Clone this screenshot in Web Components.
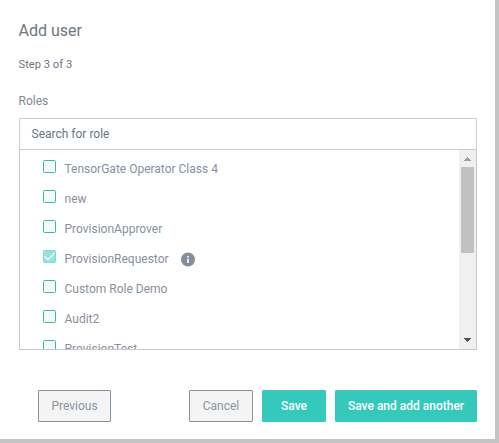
<!DOCTYPE html>
<html lang="en">
<head>
<meta charset="utf-8">
<title>Add user</title>
<style>
html, body { margin: 0; height: 100%; overflow: hidden; }
body { font-family: Roboto, "Liberation Sans", sans-serif; background: #c3c3c3; }
</style>
</head>
<body>
<user-dialog heading="Add user" step="Step 3 of 3">
  <role-picker label="Roles" prompt="Search for role">
    <role-option>TensorGate Operator Class 4</role-option>
    <role-option>new</role-option>
    <role-option>ProvisionApprover</role-option>
    <role-option checked info>ProvisionRequestor</role-option>
    <role-option>Custom Role Demo</role-option>
    <role-option>Audit2</role-option>
    <role-option>ProvisionTest</role-option>
  </role-picker>
  <action-button slot="back" style="--w:73px">Previous</action-button>
  <action-button slot="actions" style="--w:64px">Cancel</action-button>
  <action-button slot="actions" primary style="--w:64px">Save</action-button>
  <action-button slot="actions" primary style="--w:142px">Save and add another</action-button>
</user-dialog>
<script>
class UserDialog extends HTMLElement {
  connectedCallback() {
    this.attachShadow({ mode: 'open' }).innerHTML = `
      <style>
        :host { display: flex; flex-direction: column; box-sizing: border-box; width: 495px; height: 439px;
          padding: 21px 18px 17px 19px; background: #fff; color: #6c7681; }
        h1 { margin: 0 0 0 -0.5px; font-size: 16px; line-height: 20px; font-weight: 400; }
        p { margin: 17px 0 0 -0.5px; font-size: 11.2px; line-height: 14px; }
        footer { display: flex; justify-content: space-between; margin-top: auto; padding-left: 19px; }
        .end { display: flex; gap: 9px; }
      </style>
      <h1>${this.getAttribute('heading')}</h1>
      <p>${this.getAttribute('step')}</p>
      <slot></slot>
      <footer><slot name="back"></slot><div class="end"><slot name="actions"></slot></div></footer>`;
  }
}
class RolePicker extends HTMLElement {
  connectedCallback() {
    this.attachShadow({ mode: 'open' }).innerHTML = `
      <style>
        :host { display: block; margin-top: 21px; font-size: 12px; }
        label { display: block; height: 25px; margin-left: -0.5px; line-height: 16px; color: #7f8a96; }
        .search { box-sizing: border-box; height: 32px; border: 1px solid #cbd0d8; border-bottom-color: #c8ccd2;
          padding-left: 11.5px; line-height: 30px; color: #6c7681; }
        .box { display: flex; box-sizing: border-box; height: 200px; border: 1px solid #c5c8ca; border-top: 0; }
        .list { flex: 1; overflow: hidden; padding: 3px 0 0 23px; height: 196px; }
        scroll-track { flex: none; }
      </style>
      <label>${this.getAttribute('label')}</label>
      <div class="search">${this.getAttribute('prompt')}</div>
      <div class="box"><div class="list"><slot></slot></div><scroll-track></scroll-track></div>`;
  }
}
class RoleOption extends HTMLElement {
  connectedCallback() {
    const checked = this.hasAttribute('checked');
    this.attachShadow({ mode: 'open' }).innerHTML = `
      <style>
        :host { display: flex; height: 30px; color: #87919d; font-size: 12px; line-height: 33px; }
        .check { flex: none; box-sizing: border-box; width: 13px; height: 13px; margin: 7px 8.5px 0 0;
          border: 1px solid #32bda5; border-radius: 1.5px; background: #f7f8fa; }
        .check.on { border-color: #76ddcf; background: #98e4da; }
        .check svg { display: block; }
        .info { margin: 9px 0 0 12px; }
      </style>
      <span class="check ${checked ? 'on' : ''}">${checked
        ? '<svg width="11" height="11" viewBox="0 0 11 11"><path d="M.3 5.2 4 8.8 10.8 2" fill="none" stroke="#fff" stroke-width="1.1"/></svg>' : ''}</span>
      <span><slot></slot></span>
      ${this.hasAttribute('info')
        ? '<svg class="info" width="14" height="15" viewBox="0 0 14 15"><circle cx="7" cy="7.5" r="7" fill="#848e99"/><path d="M6 4h2v1.5H6zM6 6.7h2V11H6z" fill="#e8eaec"/></svg>' : ''}`;
  }
}
class ScrollTrack extends HTMLElement {
  connectedCallback() {
    this.attachShadow({ mode: 'open' }).innerHTML = `
      <style>
        :host { display: flex; flex-direction: column; align-items: center; width: 17px; background: #f0f0f0; }
        svg { display: block; flex: none; }
        .thumb { width: 13px; height: 86px; background: #c1c1c1; }
        .down { margin-top: auto; }
      </style>
      <svg width="17" height="17" shape-rendering="crispEdges"><path d="M8 7h1v1h1v1h1v1h1v1H5v-1h1V9h1V8h1z" fill="#a0a0a0"/></svg>
      <div class="thumb"></div>
      <svg class="down" width="17" height="17" shape-rendering="crispEdges"><path d="M5 6h7v1h-1v1h-1v1H9v1H8V9H7V8H6V7H5z" fill="#505050"/></svg>`;
  }
}
class ActionButton extends HTMLElement {
  connectedCallback() {
    this.attachShadow({ mode: 'open' }).innerHTML = `
      <style>
        :host { display: block; width: var(--w); }
        button { display: block; box-sizing: border-box; width: 100%; height: 32px; padding: 0; white-space: nowrap;
          border: 1px solid #84929f; border-radius: 1px; background: #f4f4f4; color: #8b959f;
          font: 400 12px/30px Roboto, "Liberation Sans", sans-serif; }
        :host([primary]) button { border-color: #35c9bb; background: #35c9bb; color: #fff; font-weight: 500; }
      </style>
      <button type="button"><slot></slot></button>`;
  }
}
customElements.define('scroll-track', ScrollTrack);
customElements.define('action-button', ActionButton);
customElements.define('role-option', RoleOption);
customElements.define('role-picker', RolePicker);
customElements.define('user-dialog', UserDialog);
</script>
</body>
</html>
